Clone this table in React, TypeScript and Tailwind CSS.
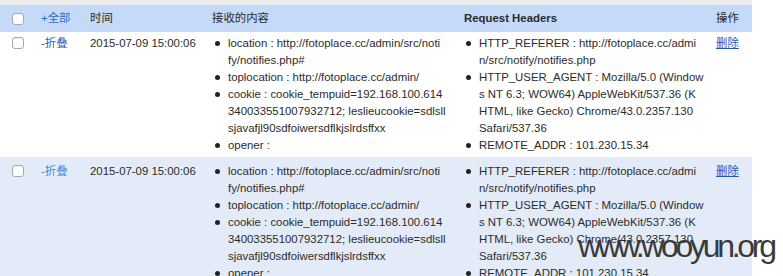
import React from "react";

const content: string[][] = [
  ["location : http://fotoplace.cc/admin/src/noti", "fy/notifies.php#"],
  ["toplocation : http://fotoplace.cc/admin/"],
  [
    "cookie : cookie_tempuid=192.168.100.614",
    "34003355100793271​2; leslieucookie=sdlsll",
    "sjavafjl90sdfoiwersdflkjslrdsffxx",
  ],
  ["opener :"],
];

const headers: string[][] = [
  ["HTTP_REFERER : http://fotoplace.cc/admi", "n/src/notify/notifies.php"],
  [
    "HTTP_USER_AGENT : Mozilla/5.0 (Window",
    "s NT 6.3; WOW64) AppleWebKit/537.36 (K",
    "HTML, like Gecko) Chrome/43.0.2357.130",
    "Safari/537.36",
  ],
  ["REMOTE_ADDR : 101.230.15.34"],
];

const rows = [
  { pt: "pt-[3px]", toggleColor: "text-[#2a62c4]", bg: "bg-white" },
  { pt: "pt-[6px]", toggleColor: "text-[#3d8fe4]", bg: "bg-[#e3ebf8]" },
];

function Box() {
  return (
    <span className="block w-[12px] h-[12px] rounded-[3px] border border-[#a9a9a9] bg-white shadow-[inset_0_1px_1px_rgba(0,0,0,0.06)]" />
  );
}

function List({ items }: { items: string[][] }) {
  return (
    <ul className="flex flex-col">
      {items.map((lines, i) => (
        <li key={i} className="flex">
          <span className="w-[16px] shrink-0 flex items-start">
            <span className="mt-[6px] ml-[3px] block w-[5px] h-[5px] rounded-full bg-[#222]" />
          </span>
          <span className="flex-1 min-w-0 flex flex-col whitespace-nowrap">
            {lines.map((l, j) => (
              <span key={j}>{l.replace("\u200b", "")}</span>
            ))}
          </span>
        </li>
      ))}
    </ul>
  );
}

export default function App() {
  return (
    <div
      className="relative w-[783px] h-[276px] overflow-hidden bg-white text-[#2b2b2b] text-[11.4px] leading-[17px]"
      style={{ fontFamily: '"Liberation Sans", Arial, "Noto Sans CJK SC", sans-serif' }}
    >
      <div className="w-[752px] h-[5px] bg-[#ececec]" />
      <table className="table-fixed border-collapse w-[752px]">
        <colgroup>
          <col className="w-[36px]" />
          <col className="w-[49px]" />
          <col className="w-[122px]" />
          <col className="w-[252px]" />
          <col className="w-[252px]" />
          <col className="w-[41px]" />
        </colgroup>
        <thead>
          <tr className="bg-[#c5d9f8] h-[27px] text-left">
            <th className="pl-[12px] align-middle font-normal">
              <Box />
            </th>
            <th className="pl-[5px] align-middle font-normal text-[#2f6ad6]">+全部</th>
            <th className="pl-[5px] align-middle font-normal">时间</th>
            <th className="pl-[5px] align-middle font-normal">接收的内容</th>
            <th className="pl-[5px] align-middle font-bold">Request Headers</th>
            <th className="pl-[5px] align-middle font-normal">操作</th>
          </tr>
        </thead>
        <tbody>
          {rows.map((r, i) => (
            <tr key={i} className={`${r.bg} align-top`}>
              <td className={`pl-[12px] ${r.pt}`}>
                <span className="block pt-[2px]">
                  <Box />
                </span>
              </td>
              <td className={`pl-[5px] ${r.pt} ${r.toggleColor}`}>-折叠</td>
              <td className={`pl-[5px] ${r.pt} whitespace-nowrap`}>2015-07-09 15:00:06</td>
              <td className={`pl-[5px] pr-[6px] ${r.pt} pb-[3px]`}>
                <List items={content} />
              </td>
              <td className={`pl-[4px] pr-[8px] ${r.pt} pb-[3px]`}>
                <List items={headers} />
              </td>
              <td className={`pl-[5px] ${r.pt}`}>
                <a className="text-[#1f55c9] underline cursor-pointer">删除</a>
              </td>
            </tr>
          ))}
        </tbody>
      </table>
      <div
        className="absolute left-[578px] top-[230px] text-[32px] leading-none tracking-[-3.3px] text-[#3a3a3a] whitespace-nowrap"
        style={{ fontFamily: '"Liberation Sans", Arial, sans-serif' }}
      >
        www.wooyun.org
      </div>
    </div>
  );
}
